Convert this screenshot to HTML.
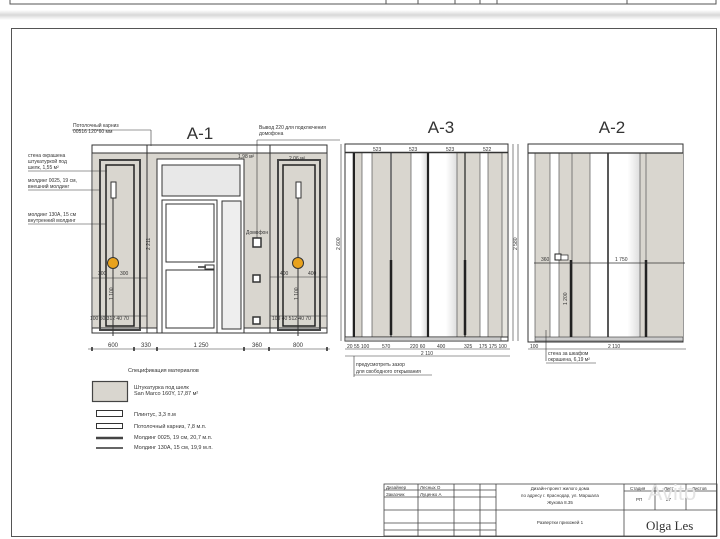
<!DOCTYPE html>
<html><head><meta charset="utf-8"><style>
html,body{margin:0;padding:0;background:#fff}
svg{display:block}
text{font-family:"Liberation Sans",sans-serif;fill:#333}
</style></head><body>
<svg width="720" height="539" viewBox="0 0 720 539" xmlns="http://www.w3.org/2000/svg">
<defs>
<linearGradient id="gw" x1="0" x2="1"><stop offset="0" stop-color="#fff"/><stop offset="0.6" stop-color="#fff"/><stop offset="1" stop-color="#ddd"/></linearGradient>
<linearGradient id="band" x1="0" y1="0" x2="0" y2="1"><stop offset="0" stop-color="#fff"/><stop offset="0.5" stop-color="#d8d8d8"/><stop offset="1" stop-color="#fff"/></linearGradient>
</defs>
<!-- top strip -->
<rect x="0" y="0" width="720" height="539" fill="#fff"/>
<path d="M10 0V4H716V0" fill="none" stroke="#555" stroke-width="1"/>
<path d="M386 0V4M418 0V4M455 0V4M480 0V4M497 0V4M627 0V4" stroke="#555"/>
<rect x="0" y="10" width="720" height="10" fill="url(#band)"/>
<rect x="11.5" y="28.5" width="705" height="508" fill="none" stroke="#555" stroke-width="1"/>

<!-- A-1 -->
<text x="200" y="139" font-size="17" text-anchor="middle">А-1</text>
<rect x="92" y="145" width="235" height="188" fill="#fff" stroke="#333"/>
<rect x="93" y="153" width="233" height="175" fill="#d9d6cf"/>
<line x1="92" y1="153" x2="327" y2="153" stroke="#333"/>
<line x1="92" y1="328" x2="327" y2="328" stroke="#333"/>
<line x1="147" y1="145" x2="147" y2="333" stroke="#333"/>
<line x1="270" y1="145" x2="270" y2="333" stroke="#333"/>
<!-- left panel -->
<rect x="100" y="160" width="40" height="170" fill="none" stroke="#444" stroke-width="2"/>
<rect x="106" y="165" width="28" height="161" fill="none" stroke="#222" stroke-width="1.5"/>
<rect x="111" y="182" width="5" height="16" fill="#fff" stroke="#333"/>
<line x1="113" y1="198" x2="113" y2="336" stroke="#333"/>
<circle cx="113" cy="263" r="5.5" fill="#e8a21d" stroke="#333"/>
<line x1="92" y1="278" x2="147" y2="278" stroke="#333" stroke-width=".6"/>
<line x1="92" y1="316" x2="147" y2="316" stroke="#333" stroke-width=".6"/>
<!-- right panel -->
<rect x="278" y="160" width="42" height="170" fill="none" stroke="#444" stroke-width="2"/>
<rect x="283" y="165" width="32" height="161" fill="none" stroke="#222" stroke-width="1.5"/>
<rect x="296" y="182" width="5" height="16" fill="#fff" stroke="#333"/>
<line x1="298" y1="198" x2="298" y2="336" stroke="#333"/>
<circle cx="298" cy="263" r="5.5" fill="#e8a21d" stroke="#333"/>
<line x1="270" y1="277" x2="327" y2="277" stroke="#333" stroke-width=".6"/>
<line x1="270" y1="316" x2="327" y2="316" stroke="#333" stroke-width=".6"/>
<!-- door -->
<rect x="157" y="159" width="87" height="174" fill="#fff" stroke="#333"/>
<rect x="162" y="165" width="78" height="31" fill="#e8e8e8" stroke="#333"/>
<rect x="162" y="200" width="55" height="133" fill="#fff" stroke="#333"/>
<rect x="166" y="204" width="48" height="58" fill="#fff" stroke="#333"/>
<rect x="166" y="270" width="48" height="58" fill="#fff" stroke="#333"/>
<rect x="222" y="201" width="19" height="128" fill="#eee" stroke="#333"/>
<rect x="205" y="265" width="9" height="4" fill="#fff" stroke="#333"/>
<line x1="198" y1="267" x2="206" y2="267" stroke="#333" stroke-width="1.5"/>
<!-- intercom -->
<rect x="253" y="238" width="8" height="9" fill="#fff" stroke="#333" stroke-width="1.5"/>
<rect x="253" y="275" width="7" height="7" fill="#fff" stroke="#333" stroke-width="1.5"/>
<rect x="253" y="317" width="7" height="7" fill="#fff" stroke="#333" stroke-width="1.5"/>
<line x1="257" y1="140" x2="257" y2="238" stroke="#333" stroke-width=".6"/>
<line x1="257" y1="140" x2="340" y2="140" stroke="#333" stroke-width=".6"/>
<line x1="151" y1="130" x2="151" y2="146" stroke="#333" stroke-width=".6"/>
<line x1="72" y1="130" x2="151" y2="130" stroke="#333" stroke-width=".6"/>
<text x="73" y="127" font-size="5">Потолочный карниз</text>
<text x="73" y="133" font-size="5">00516 120*60 мм</text>
<text x="259" y="129" font-size="5">Вывод 220 для подключения</text>
<text x="259" y="135" font-size="5">домофона</text>
<text x="246" y="234" font-size="5">Домофон</text>
<text x="238" y="158" font-size="5">1,98 м²</text>
<text x="289" y="160" font-size="5">2,06 м²</text>
<!-- left leaders -->
<text x="28" y="157" font-size="5">стена окрашена</text>
<text x="28" y="163" font-size="5">штукатуркой под</text>
<text x="28" y="169" font-size="5">шелк, 1,55 м²</text>
<line x1="28" y1="171" x2="107" y2="171" stroke="#333" stroke-width=".6"/>
<text x="28" y="182" font-size="5">молдинг 0025, 19 см,</text>
<text x="28" y="188" font-size="5">внешний молдинг</text>
<line x1="28" y1="190" x2="100" y2="190" stroke="#333" stroke-width=".6"/>
<text x="28" y="216" font-size="5">молдинг 130А, 15 см</text>
<text x="28" y="222" font-size="5">внутренний молдинг</text>
<line x1="28" y1="224" x2="106" y2="224" stroke="#333" stroke-width=".6"/>
<text x="150" y="250" font-size="5" transform="rotate(-90 150 250)">2 211</text>
<text x="120" y="275" font-size="5">300</text><text x="98" y="275" font-size="5">300</text>
<text x="280" y="275" font-size="5">400</text><text x="308" y="275" font-size="5">400</text>
<text x="113" y="300" font-size="5" transform="rotate(-90 113 300)">1 100</text>
<text x="298" y="300" font-size="5" transform="rotate(-90 298 300)">1 100</text>
<text x="90" y="320" font-size="5">100 50 312 40 70</text>
<text x="272" y="320" font-size="5">100 40 512 40 70</text>
<!-- A-1 dims -->
<line x1="88" y1="349" x2="330" y2="349" stroke="#333" stroke-width=".6"/>
<path d="M92 347v4M134 347v4M157 347v4M244 347v4M269 347v4M327 347v4" stroke="#222" stroke-width="1.5"/>
<text x="113" y="347" font-size="6" text-anchor="middle">600</text>
<text x="146" y="347" font-size="6" text-anchor="middle">330</text>
<text x="201" y="347" font-size="6" text-anchor="middle">1 250</text>
<text x="257" y="347" font-size="6" text-anchor="middle">360</text>
<text x="298" y="347" font-size="6" text-anchor="middle">800</text>

<!-- A-3 -->
<text x="441" y="133" font-size="17" text-anchor="middle">А-3</text>
<rect x="345" y="144" width="163" height="197" fill="#fff" stroke="#333"/>
<rect x="353" y="153" width="9" height="184" fill="#d9d6cf"/>
<rect x="372" y="153" width="18" height="184" fill="#d9d6cf"/>
<rect x="392" y="153" width="19" height="184" fill="#d9d6cf"/>
<rect x="411" y="153" width="16" height="184" fill="url(#gw)"/>
<rect x="429" y="153" width="28" height="184" fill="url(#gw)"/>
<rect x="457" y="153" width="23" height="184" fill="#d9d6cf"/>
<rect x="488" y="153" width="14" height="184" fill="#d9d6cf"/>
<rect x="502" y="153" width="5" height="184" fill="#e8e6e0"/>
<path d="M353 153V337M362 153V337M372 153V337M411 153V337M457 153V337M480 153V337M488 153V337M502 153V337" stroke="#555" stroke-width=".7"/>
<line x1="345" y1="152.5" x2="508" y2="152.5" stroke="#333" stroke-width="1.5"/>
<line x1="345" y1="337" x2="508" y2="337" stroke="#333"/>
<rect x="345" y="337" width="156" height="4" fill="#ccc" stroke="#333" stroke-width=".6"/>
<line x1="354" y1="153" x2="354" y2="337" stroke="#222" stroke-width="2"/>
<line x1="391" y1="153" x2="391" y2="337" stroke="#222" stroke-width="1.2"/>
<line x1="428" y1="153" x2="428" y2="337" stroke="#222" stroke-width="2.2"/>
<line x1="465" y1="153" x2="465" y2="337" stroke="#222" stroke-width="1.2"/>
<line x1="391" y1="260" x2="391" y2="335" stroke="#222" stroke-width="2.5"/>
<line x1="465" y1="260" x2="465" y2="335" stroke="#222" stroke-width="2.5"/>
<text x="373" y="151" font-size="5">523</text><text x="409" y="151" font-size="5">523</text><text x="446" y="151" font-size="5">523</text><text x="483" y="151" font-size="5">522</text>
<line x1="341" y1="144" x2="341" y2="341" stroke="#333" stroke-width=".6"/>
<line x1="513" y1="144" x2="513" y2="341" stroke="#333" stroke-width=".6"/>
<text x="340" y="250" font-size="5" transform="rotate(-90 340 250)">2 600</text>
<line x1="345" y1="349" x2="510" y2="349" stroke="#333" stroke-width=".6"/>
<line x1="345" y1="356" x2="510" y2="356" stroke="#333" stroke-width=".6"/>
<text x="347" y="348" font-size="5">20 55 100</text><text x="382" y="348" font-size="5">570</text><text x="410" y="348" font-size="5">220 60</text><text x="437" y="348" font-size="5">400</text><text x="464" y="348" font-size="5">325</text><text x="479" y="348" font-size="5">175 175 100</text>
<text x="427" y="355" font-size="5" text-anchor="middle">2 110</text>
<line x1="354" y1="356" x2="354" y2="377" stroke="#333" stroke-width=".6"/>
<text x="356" y="366" font-size="5">предусмотреть зазор</text>
<text x="356" y="373" font-size="5">для свободного открывания</text>
<line x1="354" y1="375" x2="432" y2="375" stroke="#333" stroke-width=".6"/>

<!-- A-2 -->
<text x="612" y="133" font-size="17" text-anchor="middle">А-2</text>
<rect x="528" y="144" width="155" height="198" fill="#fff" stroke="#333"/>
<rect x="535" y="153" width="15" height="184" fill="#d9d6cf"/>
<rect x="559" y="153" width="31" height="184" fill="#d9d6cf"/>
<rect x="609" y="153" width="31" height="184" fill="url(#gw)"/>
<rect x="640" y="153" width="43" height="184" fill="#d9d6cf"/>
<path d="M535 153V337M550 153V337M559 153V337M572 153V337M590 153V337M640 153V337M646 153V337" stroke="#555" stroke-width=".7"/>
<line x1="608" y1="153" x2="608" y2="337" stroke="#222" stroke-width="1.5"/>
<line x1="528" y1="153" x2="683" y2="153" stroke="#333" stroke-width="1.2"/>
<rect x="535" y="337" width="148" height="4" fill="#ccc" stroke="#333" stroke-width=".6"/>
<line x1="571" y1="260" x2="571" y2="337" stroke="#222" stroke-width="2.5"/>
<line x1="646" y1="260" x2="646" y2="337" stroke="#222" stroke-width="2.5"/>
<line x1="534" y1="263" x2="685" y2="263" stroke="#333" stroke-width=".7"/>
<rect x="555" y="254" width="6" height="6" fill="#fff" stroke="#222"/>
<rect x="561" y="255" width="7" height="5" fill="#fff" stroke="#222" stroke-width=".7"/>
<text x="541" y="261" font-size="5">360</text><text x="615" y="261" font-size="5">1 750</text>
<text x="567" y="305" font-size="5" transform="rotate(-90 567 305)">1 200</text>
<line x1="518" y1="144" x2="518" y2="341" stroke="#333" stroke-width=".6"/>
<text x="517" y="250" font-size="5" transform="rotate(-90 517 250)">2 580</text>
<line x1="528" y1="349" x2="686" y2="349" stroke="#333" stroke-width=".6"/>
<text x="530" y="348" font-size="5">100</text><text x="608" y="348" font-size="5">2 110</text>
<line x1="546" y1="330" x2="546" y2="361" stroke="#333" stroke-width=".6"/>
<text x="548" y="355" font-size="5">стена за шкафом</text>
<text x="548" y="361" font-size="5">окрашена, 6,19 м²</text>
<line x1="546" y1="363" x2="596" y2="363" stroke="#333" stroke-width=".6"/>

<!-- legend -->
<text x="128" y="372" font-size="5.5">Спецификация материалов</text>
<rect x="92.5" y="381.5" width="35" height="20" fill="#d9d6cf" stroke="#444" stroke-width="1.2"/>
<text x="134" y="389" font-size="5.5">Штукатурка под шелк</text>
<text x="134" y="395" font-size="5.5">San Marco 160Y, 17,87 м²</text>
<rect x="96.5" y="410.5" width="26" height="6" fill="#fff" stroke="#333"/>
<text x="134" y="416" font-size="5.5">Плинтус, 3,3 п.м</text>
<rect x="96.5" y="423.5" width="26" height="5" fill="#fff" stroke="#333"/>
<text x="134" y="428" font-size="5.5">Потолочный карниз, 7,8 м.п.</text>
<line x1="96" y1="438" x2="123" y2="438" stroke="#444" stroke-width="2.5"/>
<text x="134" y="439" font-size="5.5">Молдинг 0025, 19 см, 20,7 м.п.</text>
<line x1="96" y1="448" x2="123" y2="448" stroke="#333" stroke-width="1.5"/>
<text x="134" y="449" font-size="5.5">Молдинг 130А, 15 см, 19,9 м.п.</text>

<!-- title block -->
<g stroke="#444" stroke-width=".8" fill="none">
<rect x="384" y="484" width="333" height="52"/>
<path d="M384 490H496M384 497H496M384 510H496M384 523H496M384 530H496"/>
<path d="M418 484V536M454 484V536M480 484V536M496 484V536"/>
<path d="M496 510H624M624 484V536M624 491H717M624 510H717M655 484V510M686 484V510"/>
</g>
<text x="386" y="489" font-size="4.5">Дизайнер</text><text x="420" y="489" font-size="4.5">Лесных О</text>
<text x="386" y="496" font-size="4.5">Заказчик</text><text x="420" y="496" font-size="4.5">Луценко А</text>
<text x="560" y="490" font-size="4.5" text-anchor="middle">Дизайн-проект жилого дома</text>
<text x="560" y="497" font-size="4.5" text-anchor="middle">по адресу г. Краснодар, ул. Маршала</text>
<text x="560" y="504" font-size="4.5" text-anchor="middle">Жукова 8.35</text>
<text x="560" y="524" font-size="4.5" text-anchor="middle">Развертки прихожей 1</text>
<text x="630" y="490" font-size="4.5">Стадия</text><text x="664" y="490" font-size="4.5">Лист</text><text x="692" y="490" font-size="4.5">Листов</text>
<text x="636" y="501" font-size="4.5">РП</text><text x="666" y="501" font-size="4.5">27</text>
<text x="672" y="500" font-size="22" fill="#e6e6e6" style="fill:#e4e4e4" text-anchor="middle">Avito</text>
<text x="646" y="530" font-size="13" style="font-family:'Liberation Serif',serif">Olga Les</text>
</svg>
</body></html>
